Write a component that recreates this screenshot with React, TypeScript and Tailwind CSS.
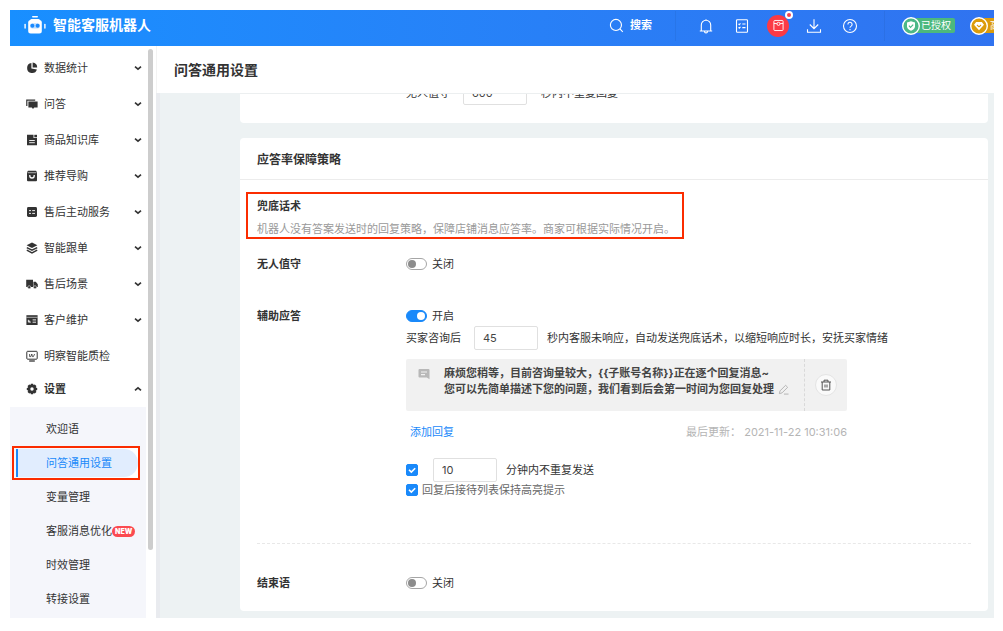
import { useState } from 'react'
import type { ReactNode } from 'react'


const menu = [
    { name: '数据统计', icon: 'pie', arrow: true },
    { name: '问答', icon: 'chat', arrow: true },
    { name: '商品知识库', icon: 'doc', arrow: true },
    { name: '推荐导购', icon: 'bag', arrow: true },
    { name: '售后主动服务', icon: 'list', arrow: true },
    { name: '智能跟单', icon: 'layers', arrow: true },
    { name: '售后场景', icon: 'truck', arrow: true },
    { name: '客户维护', icon: 'card', arrow: true },
    { name: '明察智能质检', icon: 'monitor', arrow: false },
]

const settings = ['欢迎语', '问答通用设置', '变量管理', '客服消息优化', '时效管理', '转接设置']

// 12x12 filled glyphs of the side menu
const menuIcons: Record<string, ReactNode> = {
    pie: (
        <>
            <path d="M5.4 1A5 5 0 1 0 10.9 7.4L5.4 6.5z" fill="currentColor" />
            <path d="M6.6.6A5 5 0 0 1 11.2 5.4H6.6z" fill="currentColor" />
        </>
    ),
    chat: (
        <>
            <path d="M.8 8V2.2h8.4" fill="none" stroke="currentColor" strokeWidth="1.2" />
            <path d="M2.4 3.4h9.2v6.2H8.2L7 11 5.8 9.6H2.4z" fill="currentColor" />
        </>
    ),
    doc: (
        <>
            <path d="M1 .8h6.5V4H11v7.2H1z" fill="currentColor" />
            <path d="M8.3.8H11v2.500H8.3z" fill="currentColor" />
            <path d="M3.2 6.5h5.6M3.2 8.7h5.6" stroke="#fff" strokeWidth=".9" />
        </>
    ),
    bag: (
        <>
            <path d="M2 .8h8l1 1.4v8.1a1 1 0 0 1-1 1H2a1 1 0 0 1-1-1V2.2z" fill="currentColor" />
            <path d="M1.6 2.7h8.8" stroke="#fff" strokeWidth=".6" />
            <path d="M3.8 5v.8a2.2 2.2 0 0 0 4.4 0V5" fill="none" stroke="#fff" strokeWidth="1.3" />
        </>
    ),
    list: (
        <>
            <rect x="1" y="1" width="10" height="10" rx="1.4" fill="currentColor" />
            <path d="M3 4.6h2M6.2 4.6H9M3 7.4h2M6.2 7.4H9" stroke="#fff" strokeWidth=".9" />
        </>
    ),
    layers: (
        <>
            <path d="M6 .6l5.4 2.7L6 6 .6 3.3z" fill="currentColor" />
            <path d="M.8 5.6L6 8.2l5.2-2.6M.8 8.2L6 10.9l5.2-2.7" fill="none" stroke="currentColor" strokeWidth="1.4" />
        </>
    ),
    truck: (
        <>
            <path d="M.2 1.8H7V9H.2zM7.4 3.8h2.4l2 2.4V9H7.4z" fill="currentColor" />
            <circle cx="3.2" cy="9.2" r="1.5" fill="currentColor" stroke="#fff" strokeWidth=".5" />
            <circle cx="9" cy="9.2" r="1.5" fill="currentColor" stroke="#fff" strokeWidth=".5" />
        </>
    ),
    card: (
        <>
            <path d="M.4 1.2h11.2V11H.4z" fill="currentColor" />
            <path d="M.4 3.3h11.2" stroke="#fff" strokeWidth=".6" />
            <path d="M2.4 5.8v2.300h2.400M3.600 7.800V6.600M6.600 5.900h3.400M6.600 8.200h3.400" stroke="#fff" strokeWidth=".9" fill="none" />
        </>
    ),
    monitor: (
        <g fill="none" stroke="currentColor">
            <rect x=".8" y="1.3" width="10.4" height="7.900" rx=".8" />
            <path d="M3.2 11h5.6" strokeWidth="1.3" />
            <path d="M3.6 4v2.6h1.200l1-2.600.600 2.600h1L8.600 4" strokeWidth=".8" />
        </g>
    ),
    gear: (
        <>
            <path
                d="M4.9.8h2.2l.4 1.3 1.3-.6 1.6 1.6-.6 1.3 1.4.5v2.2l-1.4.5.6 1.3-1.6 1.6-1.3-.6-.4 1.3H4.9l-.4-1.3-1.3.6-1.6-1.6.6-1.3L.8 7.1V4.9l1.4-.5-.6-1.3 1.6-1.6 1.3.6z"
                fill="currentColor"
            />
            <circle cx="6" cy="6" r="1.7" fill="#fff" />
        </>
    ),
}

function MenuIcon({ name }: { name: string }) {
    return (
        <svg viewBox="0 0 12 12" className="h-3 w-3 shrink-0" aria-hidden="true">
            {menuIcons[name]}
        </svg>
    )
}

function Chevron({ up = false }: { up?: boolean }) {
    return (
        <svg viewBox="0 0 8 8" className="ml-auto h-2 w-2" fill="none" stroke="currentColor" strokeWidth="1.6" aria-hidden="true">
            <path d={up ? 'M1 5.4L4 2.8l3 2.6' : 'M1 2.6l3 2.6 3-2.6'} />
        </svg>
    )
}

function Logo() {
    return (
        <svg viewBox="0 0 22 20" className="h-5 w-[22px]" aria-hidden="true">
            <g fill="#fff">
                <rect x="8" y="1" width="6" height="1.6" rx=".8" />
                <rect x="6" y="4" width="10" height="3" rx="1.5" />
                <rect x="4.2" y="5" width="13.6" height="13.5" rx="2.5" />
                <rect x=".4" y="8.8" width="1.4" height="5" rx=".7" />
                <rect x="20.2" y="8.8" width="1.4" height="5" rx=".7" />
            </g>
            <rect x="6" y="8.2" width="10" height="5.2" rx="2.6" fill="#1a8afe" fillOpacity=".3" />
            <circle cx="8.4" cy="10.8" r="2" fill="#1a8afe" />
            <circle cx="13.6" cy="10.8" r="2" fill="#1a8afe" />
        </svg>
    )
}

function Switch({ id, label, checked }: { id: string, label: string, checked: boolean }) {
    const [on, setOn] = useState(checked)

    return (
        <div className="flex h-5 items-center gap-[5px]">
            <input
                id={id}
                type="checkbox"
                role="switch"
                aria-label={label}
                checked={on}
                onChange={() => setOn(!on)}
                className="flex h-3 w-[21px] appearance-none items-center rounded-full border border-[#a6a6a6] bg-white px-px before:h-2 before:w-2 before:rounded-full before:bg-[#8c8c8c] checked:justify-end checked:border-[#1989fa] checked:bg-[#1989fa] checked:before:bg-white"
            />
            <label htmlFor={id}>{on ? '开启' : '关闭'}</label>
        </div>
    )
}

function Check({ id, label }: { id: string, label?: string }) {
    return (
        <span className="grid h-3 w-3 place-items-center">
            <input
                id={id}
                type="checkbox"
                defaultChecked
                aria-label={label}
                className="col-start-1 row-start-1 h-3 w-3 appearance-none rounded-xs border border-[#d9d9d9] bg-white checked:border-[#1989fa] checked:bg-[#1989fa]"
            />
            <svg viewBox="0 0 12 12" className="pointer-events-none col-start-1 row-start-1 h-3 w-3" fill="none" stroke="#fff" strokeWidth="1.6" aria-hidden="true">
                <path d="M3 5.8l2.3 2.3 3.9-3.9" />
            </svg>
        </span>
    )
}

function NumberBox({ id, value, label }: { id: string, value: string, label: string }) {
    return (
        <input
            id={id}
            type="text"
            aria-label={label}
            defaultValue={value}
            className="h-6 w-16 rounded-xs border border-[#e0e0e0] bg-white px-2 text-[11px] text-[#444]"
        />
    )
}

function HeaderButton({ label, children }: { label: string, children: ReactNode }) {
    return (
        <button type="button" aria-label={label} className="flex w-9 items-center justify-center">
            <svg viewBox="0 0 16 16" className="h-4 w-4" fill="none" stroke="#fff" strokeWidth="1.1" aria-hidden="true">
                {children}
            </svg>
        </button>
    )
}

function Header() {
    return (
        <header className="flex h-9 shrink-0 items-center overflow-hidden bg-linear-to-r from-[#188fff] to-[#3073f0] pb-[5px] text-white">
            <div className="flex items-center gap-[7px] pb-[2px] pl-[14px]">
                <Logo />
                <span className="text-sm leading-5 font-bold whitespace-nowrap">智能客服机器人</span>
            </div>
            <div className="ml-auto flex h-[30px] shrink-0 items-center">
                <button type="button" className="flex h-full items-center gap-[6px] border-r border-black/5 pr-[23px] text-[11px] font-bold">
                    <svg viewBox="0 0 16 16" className="h-[15px] w-[15px]" fill="none" stroke="#fff" strokeWidth="1.2" aria-hidden="true">
                        <circle cx="7.4" cy="7.4" r="5.9" />
                        <path d="M11.7 11.7l3 3" />
                    </svg>
                    搜索
                </button>
                <div className="flex h-full border-r border-black/5 pr-4 pl-3">
                    <HeaderButton label="通知">
                        <path d="M1.8 13h12.4M3.3 13V7a4.7 4.7 0 0 1 9.4 0v6M8 2.3V1.2M6.5 13.4a1.5 1.5 0 0 0 3 0" />
                    </HeaderButton>
                    <HeaderButton label="任务">
                        <rect x="2.5" y="1.7" width="11" height="12.6" rx=".8" />
                        <path d="M4.5 5.8l.8.8 1.2-1.2M4.5 9.3l.8.8 1.2-1.2M8.3 6h3.2M8.3 9.6h3.2" />
                    </HeaderButton>
                    <button type="button" aria-label="红包" className="relative flex w-9 items-center justify-center">
                        <span className="flex h-[22px] w-[22px] items-center justify-center rounded-full bg-[#fb3a45]">
                            <svg viewBox="0 0 12 14" className="h-[13px] w-[11px]" fill="none" stroke="#fff" aria-hidden="true">
                                <rect x="1" y="1.5" width="10" height="11" rx="1" />
                                <path d="M1 4.8h3.2M7.8 4.8H11" />
                                <circle cx="6" cy="5.2" r="1.7" />
                            </svg>
                        </span>
                        <span className="absolute top-0 right-[3px] h-2 w-2 rounded-full border-2 border-white bg-[#f5424c]" />
                    </button>
                    <HeaderButton label="下载">
                        <path d="M8 1.2v9.3M3.8 6.5L8 10.7l4.2-4.2M1.5 11.3v2.9h13v-2.9" />
                    </HeaderButton>
                    <HeaderButton label="帮助">
                        <circle cx="8" cy="8" r="6.5" />
                        <path d="M5.9 6.4a2.1 2.1 0 1 1 3.3 1.7C8.4 8.6 8 8.9 8 9.8M8 11v1.2" />
                    </HeaderButton>
                </div>
                <div className="ml-[17px] flex items-center">
                    <svg viewBox="0 0 18 18" className="z-10 h-[18px] w-[18px]" aria-hidden="true">
                        <circle cx="9" cy="9" r="8.3" fill="#4cb887" stroke="#fff" strokeWidth="1.4" />
                        <path d="M9 4.2l4 1.3v3.7c0 2-1.6 3.5-4 4.6-2.4-1.1-4-2.6-4-4.6V5.5z" fill="#fff" />
                        <path d="M6.9 8.7l1.6 1.6 2.7-2.7" fill="none" stroke="#4cb887" strokeWidth="1.2" />
                    </svg>
                    <span className="-ml-1 h-[15px] rounded-r-xs bg-[#4cb87d] pr-1 pl-[5px] text-[10px] leading-[15px] whitespace-nowrap">已授权</span>
                </div>
                <div className="ml-[15px] flex w-6 items-center overflow-hidden">
                    <svg viewBox="0 0 18 18" className="z-10 h-[18px] w-[18px] shrink-0" aria-hidden="true">
                        <circle cx="9" cy="9" r="8.3" fill="#dc9c0b" stroke="#fff" strokeWidth="1.4" />
                        <path d="M6.2 5h5.6L14 7.8l-5 5.4-5-5.4z" fill="#fff" />
                        <path d="M7 8l2 1.8L11 8" fill="none" stroke="#dc9c0b" strokeWidth="1.1" />
                    </svg>
                    <span className="-ml-1 h-[15px] shrink-0 bg-[#dc9c0b] pr-1 pl-[6px] text-[10px] leading-[15px]">高级版</span>
                </div>
            </div>
        </header>
    )
}

function Sidebar() {
    const [active, setActive] = useState('问答通用设置')

    return (
        <aside className="flex shrink-0">
            <nav className="flex w-[136px] flex-col pt-1" aria-label="主菜单">
                {menu.map((item) => (
                    <button key={item.name} type="button" className="flex h-9 shrink-0 items-center gap-[6px] pr-1 pl-4">
                        <MenuIcon name={item.icon} />
                        {item.name}
                        {item.arrow ? <Chevron /> : ''}
                    </button>
                ))}
                <button type="button" className="flex h-[33px] shrink-0 items-center gap-[6px] pr-1 pb-[3px] pl-4 font-bold">
                    <MenuIcon name="gear" />
                    设置
                    <Chevron up />
                </button>
                <ul className="flex-1 bg-[#f5f6fb] pt-[5px]">
                    {settings.map((name) => (
                        <li key={name}>
                            {name === active ? (
                                <div className="mr-[6px] ml-[2px] flex h-[34px] items-center border-2 border-[#fb2c00] bg-linear-to-r from-[#f5f6fb] to-white pl-[2px]">
                                    <a href="#" className="flex h-7 flex-1 items-center rounded-r-full border-l-2 border-[#1989fa] bg-[#e1edfe] pl-7 text-[#1989fa]">
                                        {name}
                                    </a>
                                </div>
                            ) : (
                                <a href="#" onClick={() => setActive(name)} className="flex h-[34px] items-center pl-9 whitespace-nowrap">
                                    {name}
                                    {name === '客服消息优化' ? (
                                        <span className="rounded-full bg-[#fb4a50] px-[3px] text-[7px] leading-[11px] font-black text-white">NEW</span>
                                    ) : ''}
                                </a>
                            )}
                        </li>
                    ))}
                </ul>
            </nav>
            <div className="w-[10px] px-[2px] pt-[3px]">
                <div className="h-[88%] w-[5px] rounded-full bg-[#cdcdcd]" />
            </div>
        </aside>
    )
}

function Row({ title, children }: { title: string, children: ReactNode }) {
    return (
        <section className="flex px-[17px]">
            <h3 className="w-[149px] shrink-0 leading-5 font-bold">{title}</h3>
            <div className="min-w-0 flex-1">{children}</div>
        </section>
    )
}

function Reply() {
    return (
        <div className="mt-[9px] flex h-[52px] w-[441px] rounded-xs bg-[#f1f1f1]">
            <svg viewBox="0 0 12 12" className="mt-[9px] ml-3 h-3 w-3 shrink-0" aria-hidden="true">
                <path d="M1.5 1h9a1 1 0 0 1 1 1v9.3L8.8 9.6H1.5a1 1 0 0 1-1-1V2a1 1 0 0 1 1-1z" fill="#b8b8b8" />
                <path d="M3 4h6M3 6.6h4" stroke="#f1f1f1" strokeWidth="1.1" />
            </svg>
            <div className="flex-1 pt-[6px] pl-[14px] leading-4 font-bold whitespace-nowrap text-[#444]">
                <p>麻烦您稍等，目前咨询量较大，{'{{子账号名称}}'}正在逐个回复消息~</p>
                <p className="flex items-center gap-1">
                    您可以先简单描述下您的问题，我们看到后会第一时间为您回复处理
                    <button type="button" aria-label="编辑">
                        <svg viewBox="0 0 12 12" className="h-[11px] w-[11px]" fill="none" stroke="#b0b0b0" aria-hidden="true">
                            <path d="M1.5 10.5l.7-3 6.1-6.1 2.2 2.2-6.1 6.1zM6.5 11h5" />
                        </svg>
                    </button>
                </p>
            </div>
            <div className="flex w-[43px] items-center justify-center border-l border-dashed border-[#d9d9d9]">
                <button type="button" aria-label="删除" className="flex h-[22px] w-[22px] items-center justify-center rounded-full border border-[#e4e4e4] bg-[#fafafa]">
                    <svg viewBox="0 0 12 12" className="h-3 w-3" fill="none" stroke="#555" aria-hidden="true">
                        <path d="M1 3h10M4 3V1.2h4V3M2.2 3v8h7.6V3M5 5.5v3M7 5.5v3" />
                    </svg>
                </button>
            </div>
        </div>
    )
}

export default function App() {
    return (
        <div className="flex h-screen flex-col bg-white pt-[10px] pr-[9px] pb-[13px] pl-[10px] font-['Inter','Noto_Sans_CJK_SC',sans-serif] text-[11px] text-[#333]">
            <Header />
            <div className="flex min-h-0 flex-1">
                <Sidebar />
                <main className="flex min-w-0 flex-1 flex-col">
                    <h1 className="h-[47px] shrink-0 border-l border-[#f3f3f3] pl-[17px] text-sm leading-[47px] font-bold">问答通用设置</h1>
                    <div className="flex min-h-0 flex-1 flex-col overflow-hidden border-l-4 border-[#e9ebef] bg-[#edf2f3] pr-[6px] pl-20">
                        <div className="flex h-[30px] shrink-0 items-end overflow-hidden rounded-b-sm border-t border-[#eceff0] bg-white pb-[18px] pl-[166px]">
                            <div className="flex h-6 items-center">
                                <label htmlFor="repeat" className="w-[57px]">无人值守</label>
                                <NumberBox id="repeat" value="600" label="不重复回复秒数" />
                                <span className="ml-[14px]">秒内不重复回复</span>
                            </div>
                        </div>

                        <div className="mt-[15px] shrink-0 rounded-sm bg-white pb-[18px]">
                            <h2 className="h-[42px] border-b border-[#ececec] px-[17px] text-xs leading-[43px] font-bold">应答率保障策略</h2>

                            <div className="mt-3 ml-[6px] h-[47px] w-[438px] border-2 border-[#fb2c00] px-[9px] pt-[2px] whitespace-nowrap">
                                <h3 className="leading-5 font-bold">兜底话术</h3>
                                <p className="pt-[3px] leading-5 text-[#999]">机器人没有答案发送时的回复策略，保障店铺消息应答率。商家可根据实际情况开启。</p>
                            </div>

                            <div className="mt-[15px]">
                                <Row title="无人值守">
                                    <Switch id="unattended" label="无人值守" checked={false} />
                                </Row>
                            </div>

                            <div className="mt-8">
                                <Row title="辅助应答">
                                    <Switch id="assist" label="辅助应答" checked />
                                    <div className="flex items-center whitespace-nowrap">
                                        <label htmlFor="delay" className="w-[68px]">买家咨询后</label>
                                        <NumberBox id="delay" value="45" label="买家咨询后秒数" />
                                        <span className="ml-[9px]">秒内客服未响应，自动发送兜底话术，以缩短响应时长，安抚买家情绪</span>
                                    </div>
                                    <Reply />
                                    <div className="mt-[11px] flex w-[441px] justify-between pl-1 leading-5">
                                        <a href="#" className="text-[#1989fa]">添加回复</a>
                                        <span className="text-[#b5b5b5]">最后更新： 2021-11-22 10:31:06</span>
                                    </div>
                                    <div className="mt-4 flex items-center">
                                        <Check id="limit" label="限制重复发送" />
                                        <span className="ml-[15px]">
                                            <NumberBox id="minutes" value="10" label="不重复发送分钟数" />
                                        </span>
                                        <label htmlFor="minutes" className="ml-[9px]">分钟内不重复发送</label>
                                    </div>
                                    <div className="flex items-center gap-1 leading-4 text-[#666]">
                                        <Check id="highlight" />
                                        <label htmlFor="highlight">回复后接待列表保持高亮提示</label>
                                    </div>
                                </Row>
                            </div>

                            <hr className="mx-[17px] mt-[45px] mb-[29px] border-dashed border-[#e8e8e8]" />

                            <Row title="结束语">
                                <Switch id="closing" label="结束语" checked={false} />
                            </Row>
                        </div>
                    </div>
                </main>
            </div>
        </div>
    )
}
